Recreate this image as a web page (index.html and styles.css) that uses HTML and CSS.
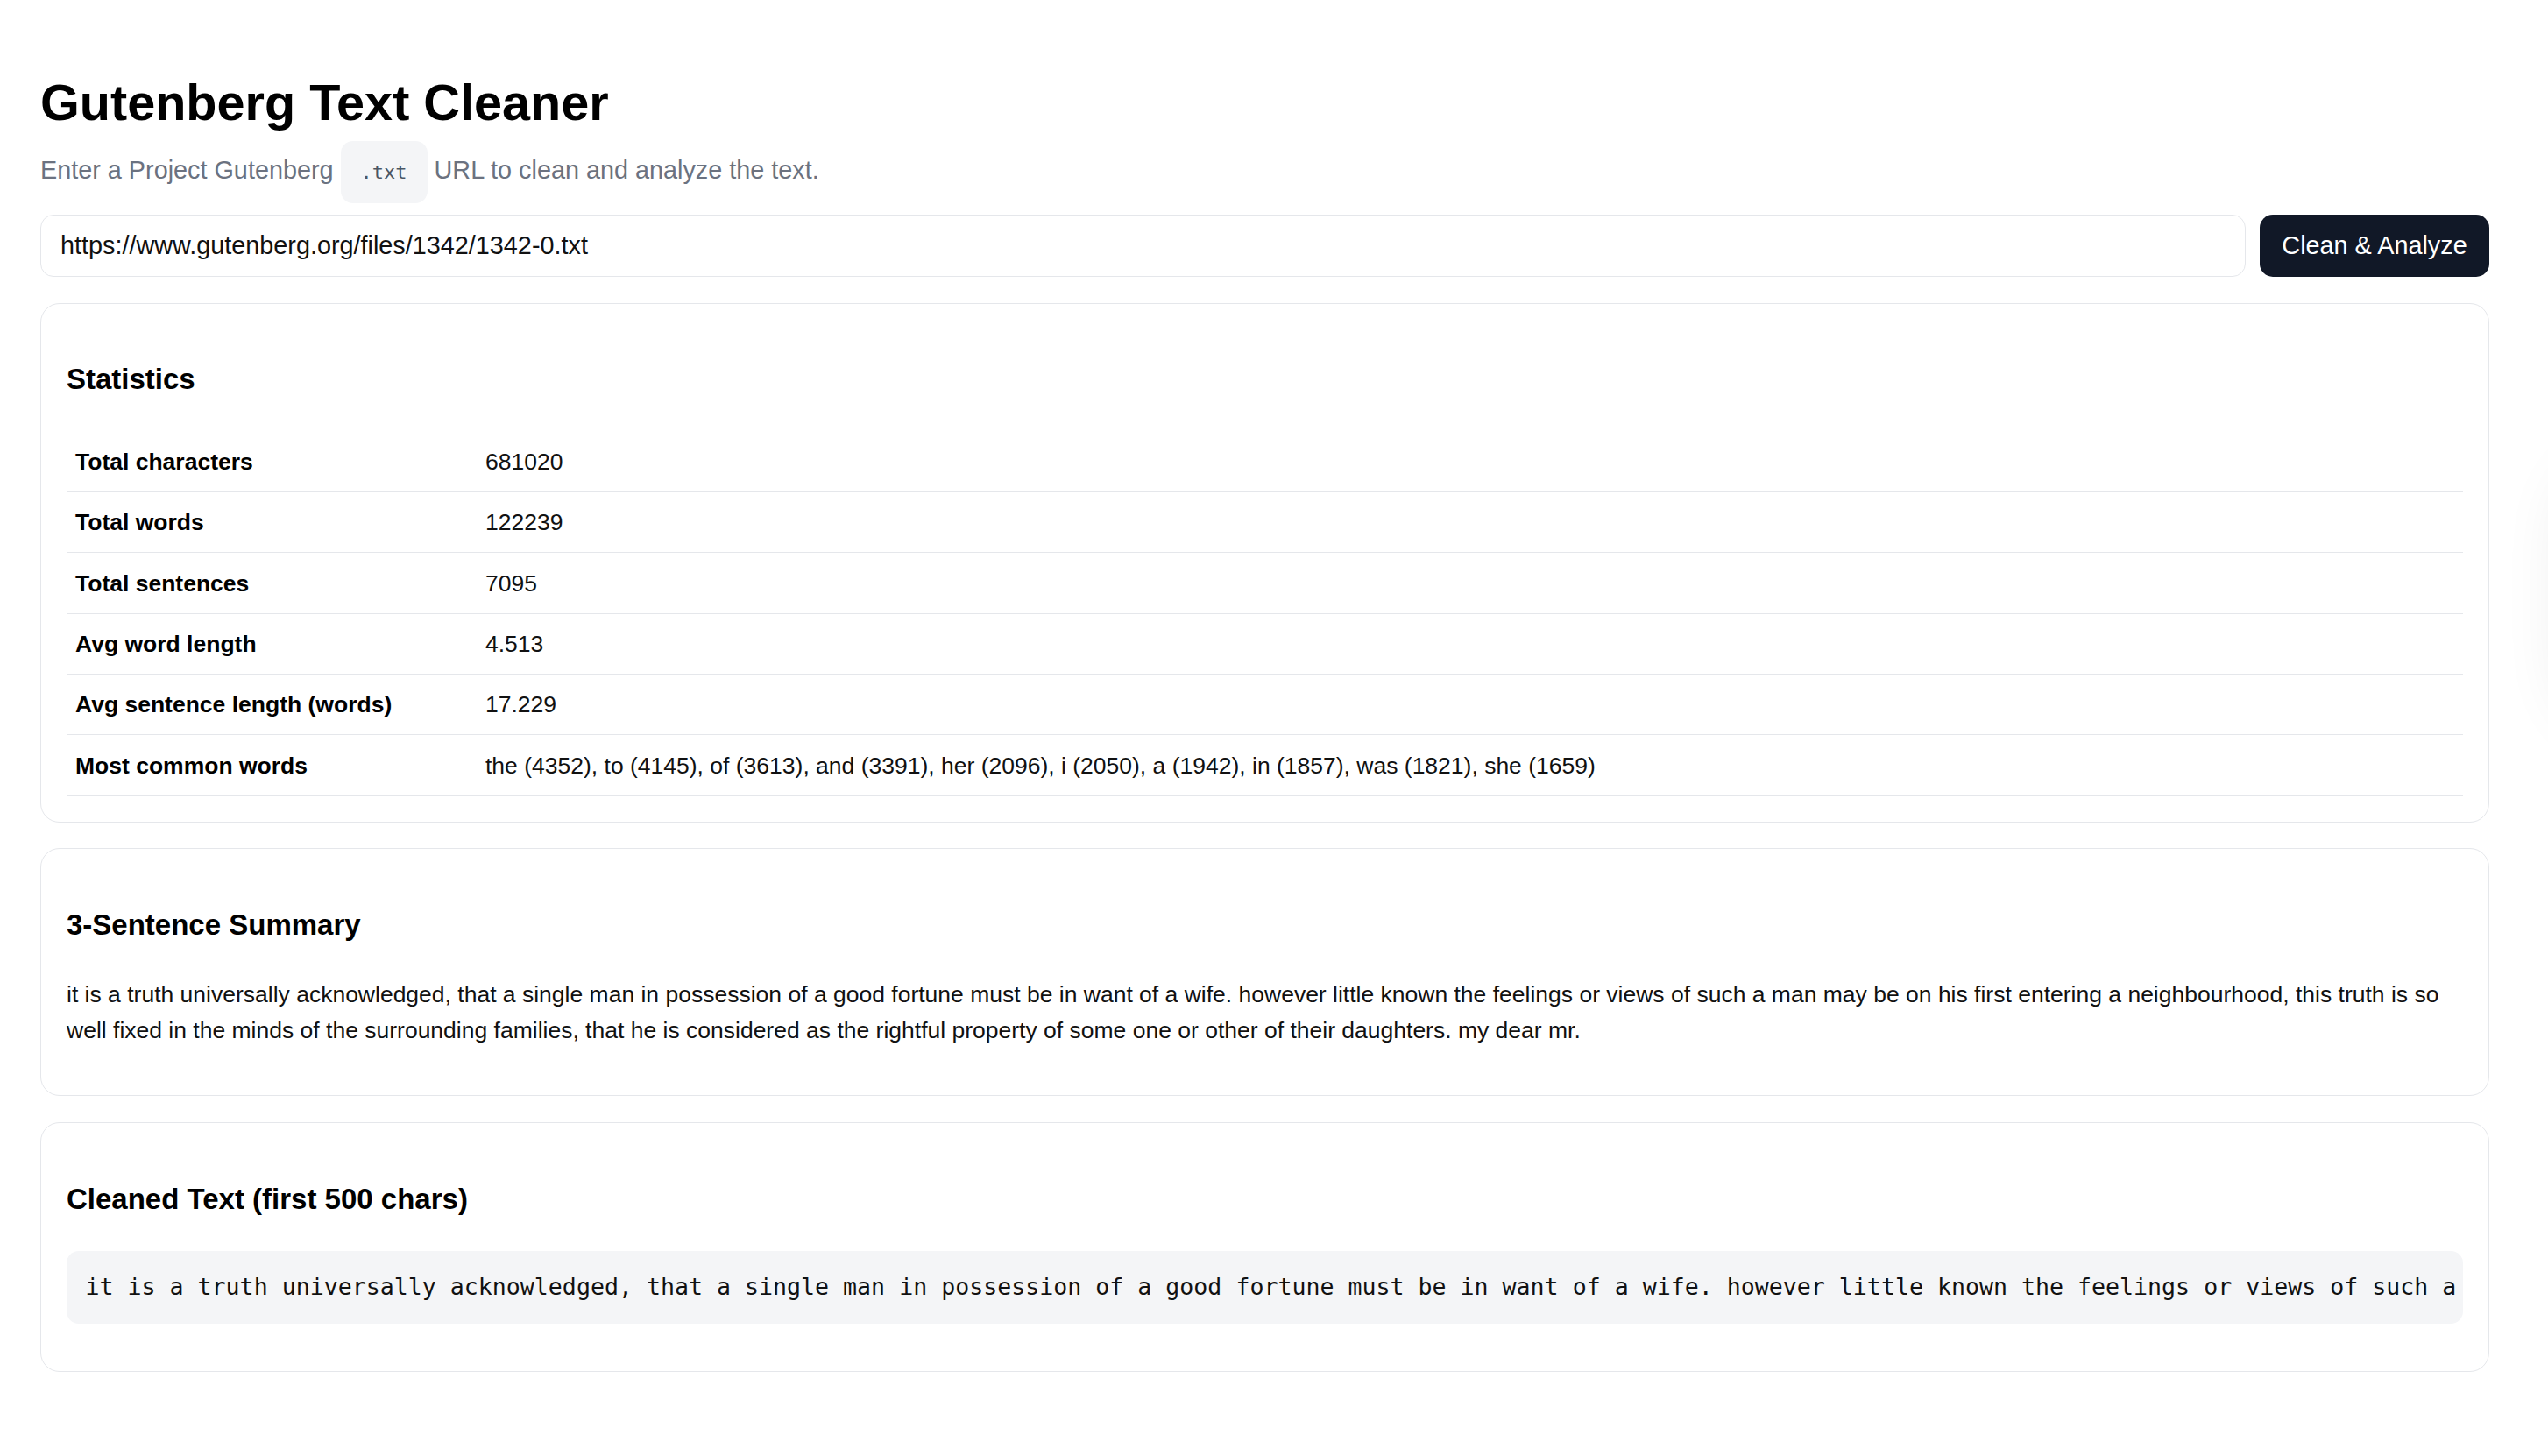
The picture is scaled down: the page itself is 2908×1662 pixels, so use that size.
FILE: index.html
```html
<!DOCTYPE html>
<html lang="en">
<head>
<meta charset="utf-8">
<title>Gutenberg Text Cleaner</title>
<link rel="stylesheet" href="styles.css">
</head>
<body>
<main class="page">
  <h1 class="title">Gutenberg Text Cleaner</h1>
  <p class="subtitle">Enter a Project Gutenberg <code class="pill">.txt</code> URL to clean and analyze the text.</p>

  <form class="url-row" onsubmit="return false;">
    <input class="url-input" type="text" value="https://www.gutenberg.org/files/1342/1342-0.txt">
    <button class="btn" type="submit">Clean &amp; Analyze</button>
  </form>

  <section class="card">
    <h2 class="card-title">Statistics</h2>
    <div class="stats">
      <div class="stat-row"><div class="stat-label">Total characters</div><div class="stat-value">681020</div></div>
      <div class="stat-row"><div class="stat-label">Total words</div><div class="stat-value">122239</div></div>
      <div class="stat-row"><div class="stat-label">Total sentences</div><div class="stat-value">7095</div></div>
      <div class="stat-row"><div class="stat-label">Avg word length</div><div class="stat-value">4.513</div></div>
      <div class="stat-row"><div class="stat-label">Avg sentence length (words)</div><div class="stat-value">17.229</div></div>
      <div class="stat-row"><div class="stat-label">Most common words</div><div class="stat-value">the (4352), to (4145), of (3613), and (3391), her (2096), i (2050), a (1942), in (1857), was (1821), she (1659)</div></div>
    </div>
  </section>

  <section class="card">
    <h2 class="card-title">3-Sentence Summary</h2>
    <p class="summary">it is a truth universally acknowledged, that a single man in possession of a good fortune must be in want of a wife. however little known the feelings or views of such a man may be on his first entering a neighbourhood, this truth is so well fixed in the minds of the surrounding families, that he is considered as the rightful property of some one or other of their daughters. my dear mr.</p>
  </section>

  <section class="card">
    <h2 class="card-title">Cleaned Text (first 500 chars)</h2>
    <pre class="cleaned">it is a truth universally acknowledged, that a single man in possession of a good fortune must be in want of a wife. however little known the feelings or views of such a man may be on his first entering a neighbourhood, this truth is so well fixed in the minds of the surrounding families, that he is considered as the rightful property of some one or other of their daughters. "my dear mr. bennet," said his lady to him one day, "have you heard that netherfield park is let at last?" mr. bennet replied that he had not.</pre>
  </section>
</main>
<div class="edge-shadow"></div>
</body>
</html>
```

FILE: styles.css
```css
html, body {
  margin: 0;
  padding: 0;
  background: #ffffff;
}

body {
  font-family: "Liberation Sans", Arial, Helvetica, sans-serif;
  color: #111111;
}

.page {
  padding: 82.5px 67px 40px 46px;
}

.title {
  margin: 0 0 21px 0;
  font-size: 57.6px;
  line-height: 69px;
  font-weight: 700;
  color: #000000;
}

.subtitle {
  margin: 0 0 29.5px 0;
  font-size: 28.8px;
  line-height: 43px;
  color: #6b7280;
}

.pill {
  font-family: "DejaVu Sans Mono", "Liberation Mono", monospace;
  font-size: 22px;
  line-height: 1;
  color: #4b5563;
  background: #f4f5f7;
  border-radius: 14px;
  padding: 23px 23px;
}

.url-row {
  display: flex;
  gap: 16px;
  height: 71px;
  margin: 0;
}

.url-input {
  flex: 1;
  box-sizing: border-box;
  height: 71px;
  margin: 0;
  padding: 0 22px;
  border: 1px solid #e5e7eb;
  border-radius: 15px;
  font-family: "Liberation Sans", Arial, sans-serif;
  font-size: 28.8px;
  color: #111111;
  background: #ffffff;
  outline: none;
}

.btn {
  box-sizing: border-box;
  width: 262px;
  height: 71px;
  margin: 0;
  padding: 0;
  border: none;
  border-radius: 15px;
  background: #111827;
  color: #ffffff;
  font-family: "Liberation Sans", Arial, sans-serif;
  font-size: 28.8px;
  cursor: pointer;
}

.card {
  margin-top: 29.6px;
  border: 1px solid #e5e7eb;
  border-radius: 22px;
  padding: 29px 29px;
  background: #ffffff;
}

.card-title {
  margin: 37.6px 0 39.4px 0;
  font-size: 33px;
  line-height: 40px;
  font-weight: 700;
  color: #000000;
}

.stats {
  display: flex;
  flex-direction: column;
}

.stat-row {
  display: grid;
  grid-template-columns: 468px 1fr;
  border-bottom: 1px solid #e5e7eb;
  font-size: 26.5px;
  line-height: 36px;
}

.stat-label,
.stat-value {
  padding: 16.2px 10px;
}

.stat-label {
  font-weight: 700;
  color: #000000;
}

.stat-value {
  color: #111111;
}

.summary {
  margin: 25px 0;
  font-size: 26.5px;
  line-height: 40.5px;
  color: #111111;
}

.cleaned {
  margin: 25px 0;
  padding: 21.5px;
  background: #f4f5f7;
  border-radius: 14px;
  font-family: "DejaVu Sans Mono", "Liberation Mono", monospace;
  font-size: 26.6px;
  line-height: 39.75px;
  color: #111111;
  white-space: pre;
  overflow: hidden;
}

.edge-shadow {
  position: fixed;
  top: 540px;
  right: -230px;
  width: 200px;
  height: 280px;
  border-radius: 60px;
  background: #ffffff;
  box-shadow: 0 0 70px 14px rgba(0, 0, 0, 0.08);
  pointer-events: none;
}
```
